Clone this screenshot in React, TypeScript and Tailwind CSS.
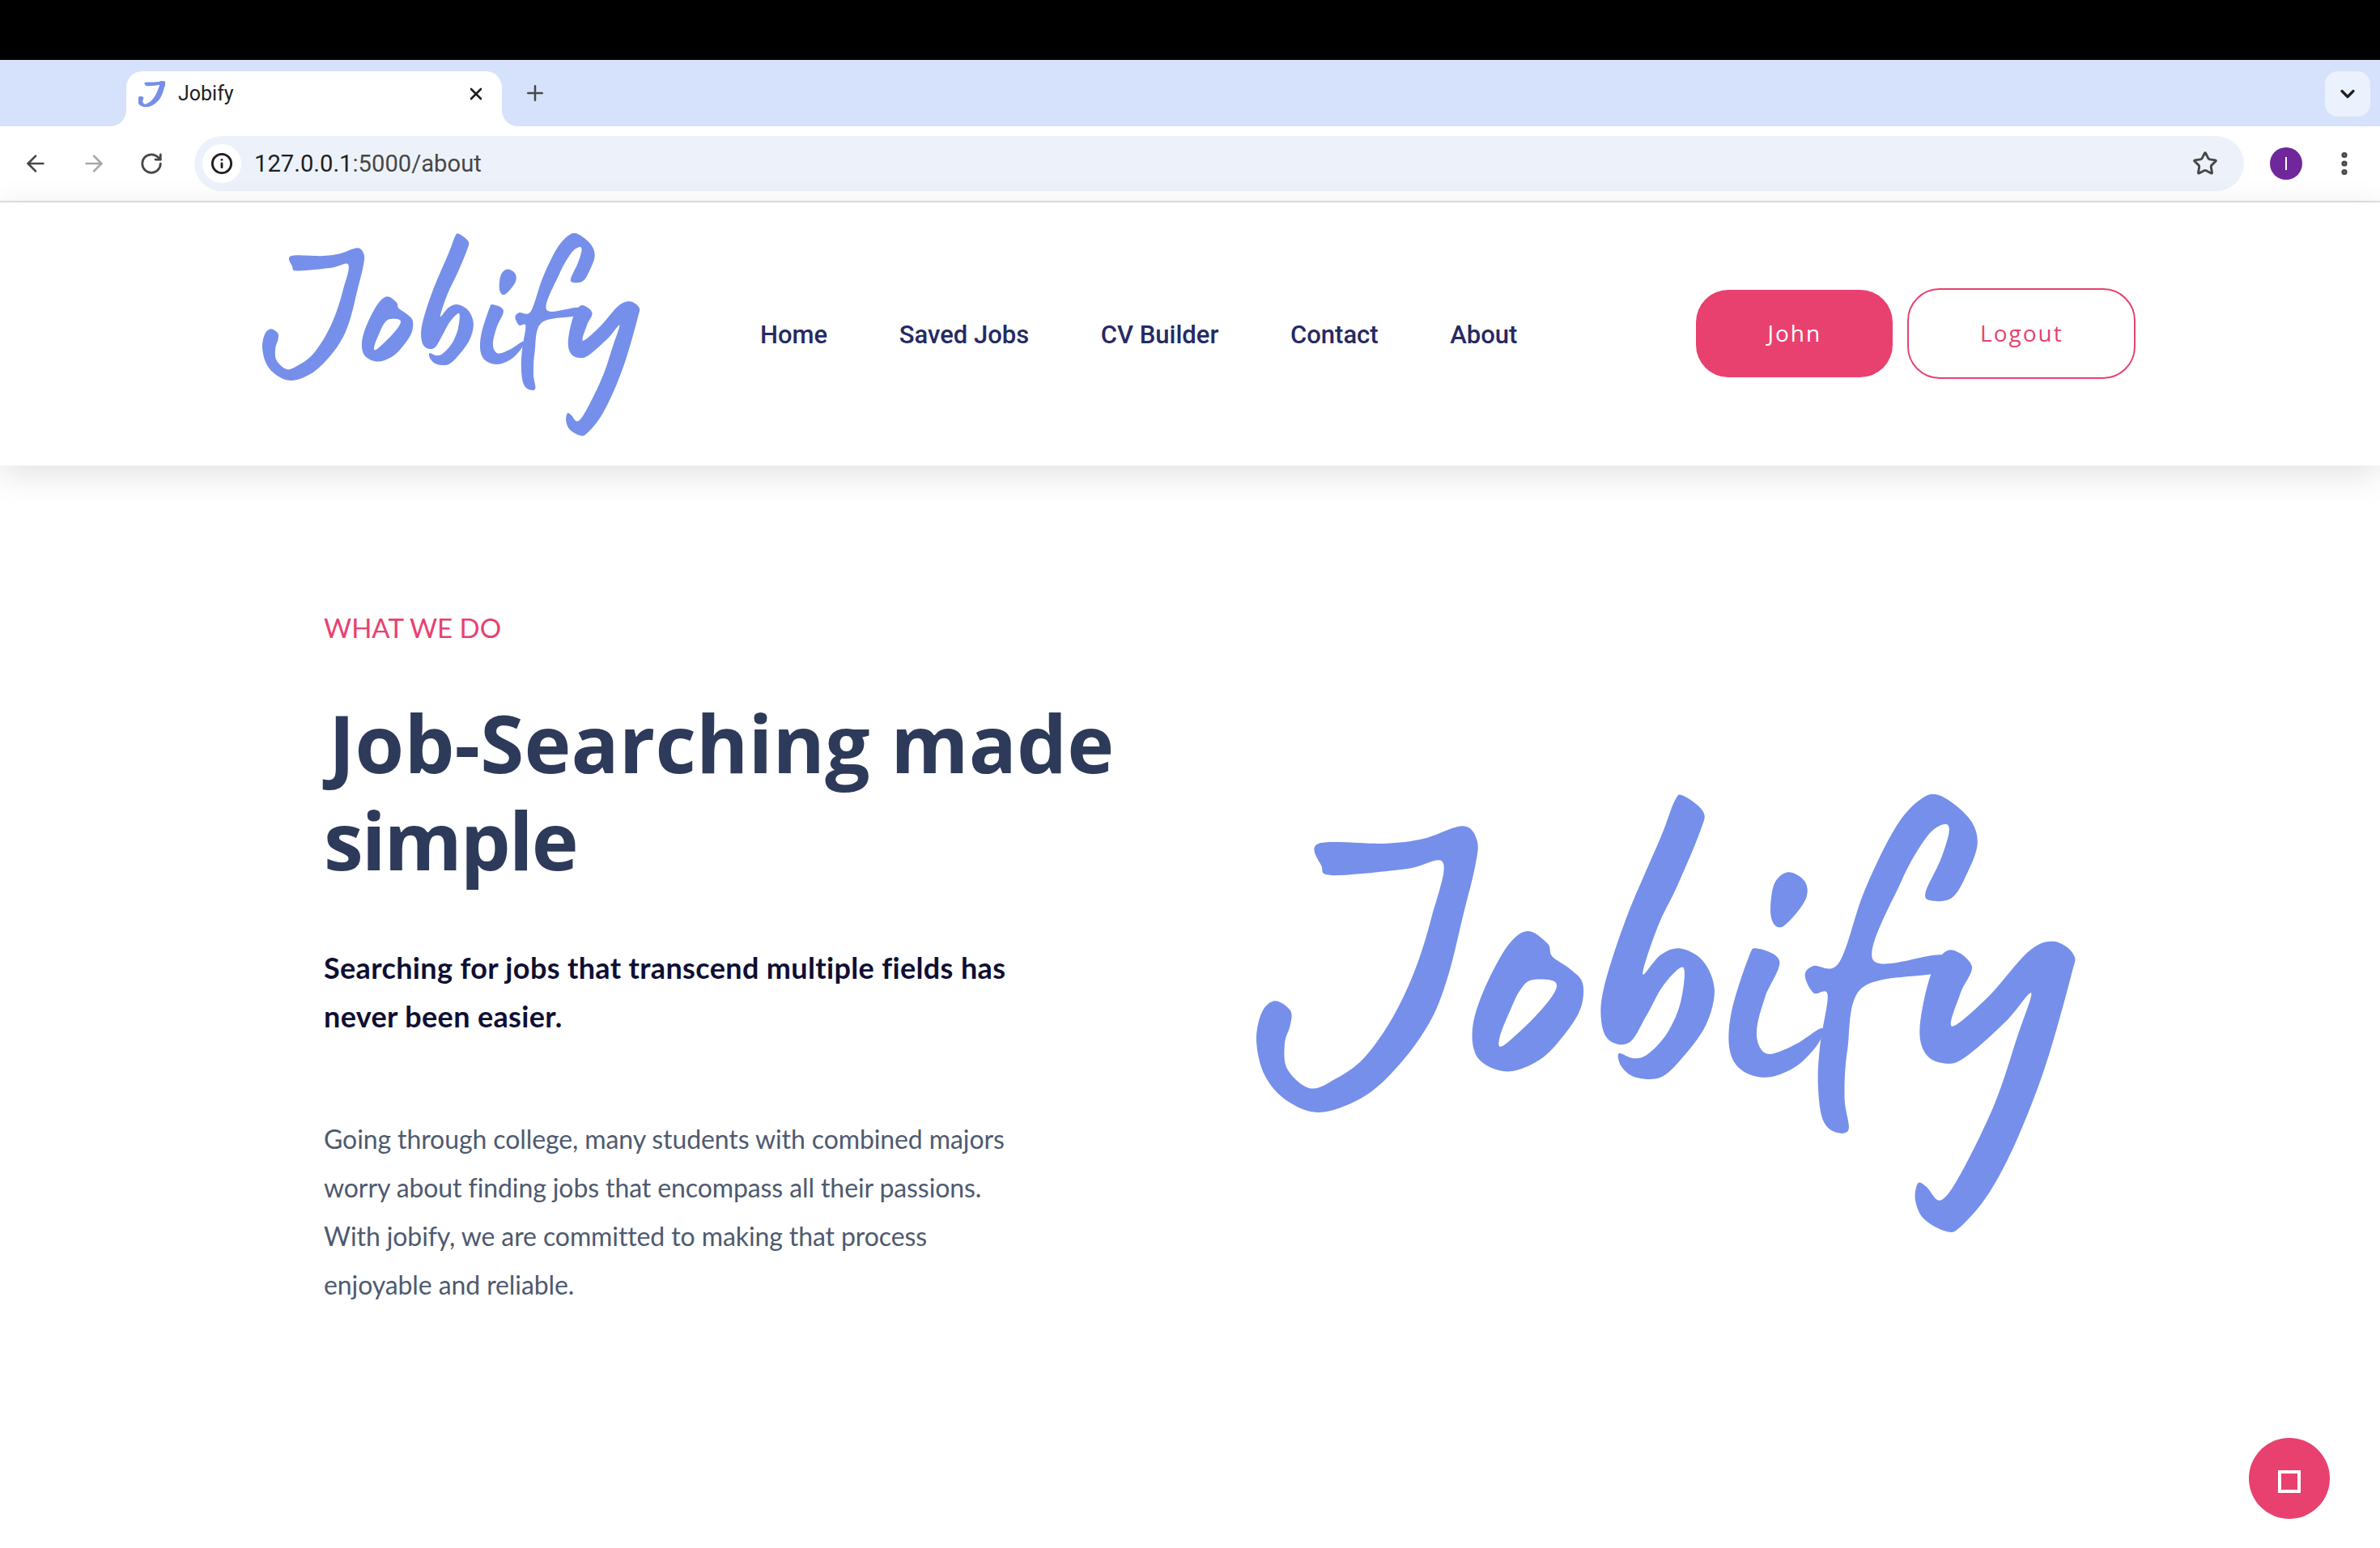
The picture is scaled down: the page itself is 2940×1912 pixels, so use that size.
import React from 'react';
import { ArrowLeft, ArrowRight, ChevronDown, EllipsisVertical, Info, Plus, RotateCw, Star, X } from 'lucide-react';

type Pt = [number, number];

// closed catmull-rom through the traced outline points of the logo
function blob(pts: Pt[]) {
  const n = pts.length;
  let d = `M${pts[0][0]} ${pts[0][1]}`;
  for (let i = 0; i < n; i++) {
    const p0 = pts[(i - 1 + n) % n];
    const p1 = pts[i];
    const p2 = pts[(i + 1) % n];
    const p3 = pts[(i + 2) % n];
    const c1x = p1[0] + (p2[0] - p0[0]) / 6;
    const c1y = p1[1] + (p2[1] - p0[1]) / 6;
    const c2x = p2[0] - (p3[0] - p1[0]) / 6;
    const c2y = p2[1] - (p3[1] - p1[1]) / 6;
    d += `C${c1x} ${c1y} ${c2x} ${c2y} ${p2[0]} ${p2[1]}`;
  }
  return d + 'Z';
}

const J: Pt[] = [[185, 250], [300, 250], [370, 235], [440, 195], [465, 240], [462, 320], [440, 480], [415, 660], [385, 800], [335, 930], [270, 1040], [190, 1095], [130, 1060], [90, 980], [75, 870], [85, 780], [108, 745], [135, 775], [135, 820], [125, 880], [130, 960], [170, 1020], [215, 990], [265, 925], [315, 800], [355, 650], [385, 480], [405, 310], [340, 330], [210, 350], [190, 320]];
const letters: Pt[][] = [
  J,
  [[555, 525], [590, 565], [598, 605], [630, 645], [652, 690], [648, 770], [620, 850], [580, 925], [530, 965], [490, 955], [462, 910], [458, 820], [480, 700], [520, 570]],
  [[560, 680], [600, 682], [603, 715], [570, 790], [512, 885], [505, 860], [525, 770], [540, 715]],
  [[830, 100], [865, 150], [860, 210], [820, 380], [785, 510], [758, 660], [790, 600], [825, 580], [865, 620], [885, 710], [870, 820], [830, 920], [790, 985], [745, 985], [720, 950], [716, 910], [740, 925], [765, 915], [800, 850], [825, 750], [830, 640], [795, 695], [765, 790], [735, 875], [700, 870], [685, 810], [690, 700], [730, 480], [790, 230], [815, 115]],
  [[1015, 340], [1045, 370], [1045, 430], [1005, 512], [985, 480], [990, 380]],
  [[960, 580], [1000, 620], [975, 730], [960, 830], [965, 890], [985, 912], [1030, 880], [1075, 830], [1068, 880], [1030, 950], [980, 985], [935, 965], [912, 900], [915, 780], [945, 610]],
  [[1105, 625], [1150, 400], [1205, 200], [1250, 110], [1285, 100], [1335, 170], [1350, 250], [1330, 350], [1305, 420], [1270, 430], [1258, 405], [1285, 300], [1300, 210], [1290, 190], [1260, 230], [1215, 370], [1165, 615], [1285, 600], [1320, 640], [1270, 660], [1145, 705], [1120, 900], [1115, 1050], [1122, 1150], [1095, 1155], [1075, 1110], [1068, 1000], [1072, 880], [1085, 725], [1060, 720], [1045, 665], [1060, 635]],
  [[1300, 585], [1340, 635], [1320, 720], [1305, 825], [1370, 730], [1440, 590], [1485, 558], [1520, 600], [1515, 670], [1470, 950], [1420, 1180], [1370, 1350], [1320, 1455], [1295, 1470], [1255, 1430], [1240, 1370], [1245, 1318], [1260, 1330], [1285, 1372], [1320, 1290], [1380, 1070], [1420, 860], [1445, 720], [1400, 810], [1330, 920], [1295, 942], [1260, 915], [1248, 830], [1268, 660]],
];

function Logo({ className }: { className: string }) {
  return (
    <svg viewBox="75 95 1450 1380" preserveAspectRatio="none" className={className}>
      {letters.map((pts, i) => (
        <path key={i} d={blob(pts)} fill={i === 2 ? '#ffffff' : '#758fea'} />
      ))}
    </svg>
  );
}

const links = ['Home', 'Saved Jobs', 'CV Builder', 'Contact', 'About'];

function BrowserChrome() {
  return (
    <div className="font-['Roboto',sans-serif]">
      <div className="h-[74px] bg-black" />
      <div className="h-[82px] bg-[#d6e2fb] flex pt-[14px] pr-[12px]">
        <div className="relative ml-[156px] w-[464px] h-[68px] bg-white rounded-t-[20px] flex items-center pl-[15px] pr-[20px]">
          <div className="absolute left-[-20px] bottom-0 w-[20px] h-[20px] bg-white">
            <div className="w-full h-full bg-[#d6e2fb] rounded-br-[20px]" />
          </div>
          <div className="absolute right-[-20px] bottom-0 w-[20px] h-[20px] bg-white">
            <div className="w-full h-full bg-[#d6e2fb] rounded-bl-[20px]" />
          </div>
          <svg viewBox="75 190 400 910" preserveAspectRatio="none" className="w-[33px] h-[32px] shrink-0 -translate-y-[6px]">
            <path d={blob(J)} fill="#758fea" stroke="#758fea" strokeWidth={30} />
          </svg>
          <span className="ml-[16px] text-[25px] text-[#1f1f1f] -translate-y-[6px]">Jobify</span>
          <X className="ml-auto w-[24px] h-[24px] text-[#1f1f1f] -translate-y-[6px]" strokeWidth={2.6} />
        </div>
        <Plus className="ml-[26px] mt-[12px] w-[30px] h-[30px] text-[#474747]" strokeWidth={2} />
        <div className="ml-auto w-[56px] h-[56px] bg-[#ebf1fd] rounded-[16px] flex items-center justify-center">
          <ChevronDown className="w-[28px] h-[28px] text-[#1f1f1f]" strokeWidth={2.8} />
        </div>
      </div>
      <div className="h-[92px] bg-white rounded-t-[20px] flex items-center pl-[28px] border-b-0">
        <ArrowLeft className="w-[32px] h-[32px] text-[#474747]" strokeWidth={2} />
        <ArrowRight className="ml-[40px] w-[32px] h-[32px] text-[#a8a8a8]" strokeWidth={2} />
        <RotateCw className="ml-[40px] w-[30px] h-[30px] text-[#474747]" strokeWidth={2.2} />
        <div className="ml-[38px] w-[2532px] h-[68px] bg-[#edf2fa] rounded-full flex items-center pl-[10px]">
          <div className="w-[48px] h-[48px] bg-white rounded-full flex items-center justify-center">
            <Info className="w-[28px] h-[28px] text-[#1f1f1f]" strokeWidth={2.4} />
          </div>
          <span className="ml-[16px] pt-[2px] text-[29.2px] text-[#1f1f1f]">127.0.0.1<span className="text-[#474747]">:5000/about</span></span>
          <Star className="ml-auto mr-[32px] w-[32px] h-[32px] text-[#474747]" strokeWidth={2.2} />
        </div>
        <div className="ml-[32px] w-[40px] h-[40px] rounded-full bg-[#6f279b] flex items-center justify-center">
          <div className="w-[2px] h-[16px] bg-white" />
        </div>
        <EllipsisVertical className="ml-[34px] w-[36px] h-[36px] text-[#474747]" strokeWidth={2.8} />
      </div>
      <div className="h-[2px] bg-[#e1e1e1]" />
    </div>
  );
}

function Navbar() {
  return (
    <nav className="relative h-[325px] bg-white shadow-[0_10px_40px_rgba(0,0,0,0.12)] flex items-center pl-[324px]">
      <Logo className="w-[467px] h-[251px] mt-[1px]" />
      <ul className="ml-[148px] mt-[4px] flex gap-[88.6px] font-['Roboto',sans-serif] font-medium text-[31px] text-[#252a63]">
        {links.map((l) => (
          <li key={l}>{l}</li>
        ))}
      </ul>
      <div className="ml-[221px] -mt-[1px] flex items-center gap-[18px] font-['Open_Sans',sans-serif] text-[28px] tracking-[2px]">
        <button className="w-[243px] h-[108px] rounded-[40px] bg-[#e8416f] text-white pb-[2px]">John</button>
        <button className="w-[282px] h-[112px] rounded-[40px] border-2 border-[#e8416f] text-[#e8416f] pb-[2px]">Logout</button>
      </div>
    </nav>
  );
}

export default function App() {
  return (
    <div className="relative h-[1912px] overflow-hidden bg-white">
      <BrowserChrome />
      <Navbar />
      <main className="flex pl-[400px] pt-[176px] font-['Lato',sans-serif]">
        <div className="w-[1152px]">
          <p className="text-[33px] leading-[48px] text-[#e8416f]">WHAT WE DO</p>
          <h1 className="mt-[58px] font-['Open_Sans',sans-serif] text-[98px] leading-[120px] font-bold text-[#2d3a5a]">
            <span className="ml-[6px] tracking-[0.15px]">Job-Searching made</span>
            <br />
            <span className="tracking-[-2px]">simple</span>
          </h1>
          <p className="mt-[68px] w-[900px] text-[36px] leading-[60px] font-bold tracking-[0.35px] text-[#0f0f33]">Searching for jobs that transcend multiple fields has never been easier.</p>
          <p className="mt-[92px] w-[860px] text-[32px] leading-[60px] tracking-[-0.1px] text-[#4e5a70]">Going through college, many students with combined majors worry about finding jobs that encompass all their passions. With jobify, we are committed to making that process enjoyable and reliable.</p>
        </div>
        <Logo className="w-[1013px] h-[542px] mt-[230px]" />
      </main>
      <button className="absolute left-[2778px] top-[1776px] w-[100px] h-[100px] rounded-full bg-[#e8416f] flex items-center justify-center">
        <div className="w-[28px] h-[28px] mt-[8px] border-4 border-white" />
      </button>
    </div>
  );
}
